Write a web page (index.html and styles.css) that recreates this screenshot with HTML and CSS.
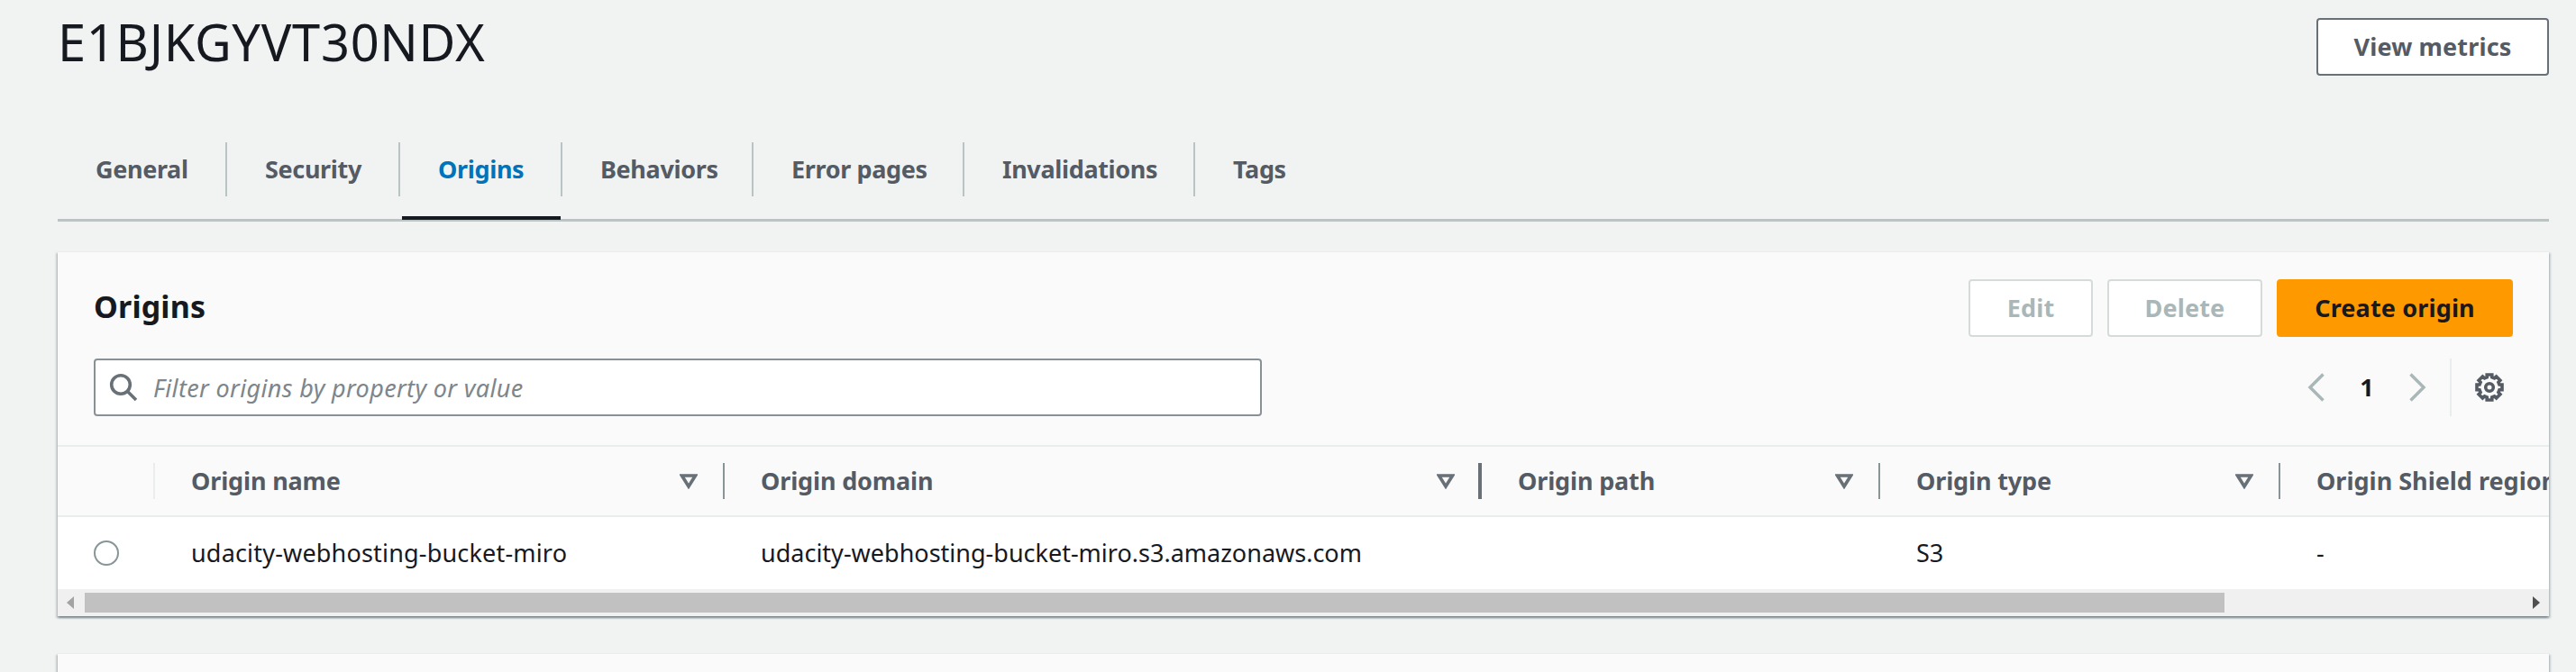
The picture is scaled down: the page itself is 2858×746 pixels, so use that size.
FILE: index.html
```html
<!DOCTYPE html>
<html lang="en">
<head>
<meta charset="utf-8">
<title>E1BJKGYVT30NDX</title>
<link rel="stylesheet" href="styles.css">
</head>
<body>
<main class="page">
  <header class="page-header">
    <h1 class="page-title">E1BJKGYVT30NDX</h1>
    <button class="btn metrics">View metrics</button>
  </header>

  <nav class="tabs">
    <a class="tab general">General</a>
    <a class="tab security">Security</a>
    <a class="tab origins active">Origins</a>
    <a class="tab behaviors">Behaviors</a>
    <a class="tab errors">Error pages</a>
    <a class="tab invalidations">Invalidations</a>
    <a class="tab tags">Tags</a>
  </nav>

  <section class="card">
    <div class="card-header">
      <h2 class="card-title">Origins</h2>
      <div class="actions">
        <button class="btn disabled edit">Edit</button>
        <button class="btn disabled delete">Delete</button>
        <button class="btn primary">Create origin</button>
      </div>
    </div>
    <div class="tools">
      <div class="filter">
        <svg class="search-icon" viewBox="0 0 32 32"><circle cx="13" cy="13" r="10.3"/><path d="M20.5 20.5 30 30"/></svg>
        <span class="placeholder">Filter origins by property or value</span>
      </div>
      <div class="pager">
        <svg class="chevron" viewBox="0 0 20 32"><path d="M17.500 1.500 3 16l14.500 14.500"/></svg>
        <span class="page-number">1</span>
        <svg class="chevron" viewBox="0 0 20 32"><path d="M2.500 1.500 17 16 2.500 30.500"/></svg>
        <span class="divider"></span>
        <svg class="gear" viewBox="0 0 32 32"><path d="M13.200 2h5.600v2.800l2.700 1.100 2.100-2 4.300 4.300-2 2.100 1.100 2.700H30v5.800h-3l-1.100 2.700 2 2.100-4.300 4.300-2.100-2-2.700 1.100V30h-5.600v-3l-2.700-1.100-2.100 2-4.300-4.300 2-2.100L5 18.800H2V13h3l1.100-2.700-2-2.100 4.300-4.300 2.100 2 2.700-1.100z"/><circle cx="16" cy="16" r="4.300"/></svg>
      </div>
    </div>

    <div class="grid head">
      <div class="cell light"></div>
      <div class="cell">Origin name<svg class="sort" viewBox="0 0 20 17"><path d="M2.500 2h15L10 14z"/></svg></div>
      <div class="cell resizing">Origin domain<svg class="sort" viewBox="0 0 20 17"><path d="M2.500 2h15L10 14z"/></svg></div>
      <div class="cell">Origin path<svg class="sort" viewBox="0 0 20 17"><path d="M2.500 2h15L10 14z"/></svg></div>
      <div class="cell">Origin type<svg class="sort" viewBox="0 0 20 17"><path d="M2.500 2h15L10 14z"/></svg></div>
      <div class="cell last">Origin Shield region</div>
    </div>
    <div class="grid row">
      <div class="pick"><span class="radio"></span></div>
      <div class="cell name">udacity-webhosting-bucket-miro</div>
      <div class="cell">udacity-webhosting-bucket-miro.s3.amazonaws.com</div>
      <div class="cell"></div>
      <div class="cell">S3</div>
      <div class="cell">-</div>
    </div>
    <div class="scrollbar">
      <svg class="arrow left" viewBox="0 0 8 14"><path d="M8 0v14L0 7z"/></svg>
      <span class="thumb"></span>
      <svg class="arrow right" viewBox="0 0 8 14"><path d="M0 0v14l8-7z"/></svg>
    </div>
  </section>

  <section class="card next"></section>
</main>
</body>
</html>
```
FILE: styles.css
```css
* { box-sizing: border-box; }

body {
  margin: 0;
  height: 746px;
  overflow: hidden;
  background: #f1f3f3;
  color: #16191f;
  font: 27px/40px "Noto Sans", sans-serif;
}

svg { display: block; flex: none; fill: none; stroke: currentColor; }

.page { padding: 0 30px 0 64px; }

.page-header {
  display: flex;
  justify-content: space-between;
  align-items: flex-start;
  height: 158px;
}
.page-title {
  margin: 10px 0 0;
  font-size: 56px;
  line-height: 72px;
  font-weight: 400;
  letter-spacing: 0.7px;
}

.btn {
  height: 64px;
  padding: 0;
  border: 2px solid #687078;
  border-radius: 4px;
  background: #fff;
  color: #545b64;
  font: 700 27px/40px "Noto Sans", sans-serif;
  letter-spacing: 0.15px;
  white-space: nowrap;
}
.metrics { width: 258px; margin-top: 20px; }
.disabled { border-color: #d5dbdb; color: #aab7b8; }
.edit { width: 138px; }
.delete { width: 172px; }
.primary { width: 262px; border-color: #f90; background: #f90; color: #16191f; }

.tabs {
  display: flex;
  height: 88px;
  border-bottom: 3px solid #b9c4c5;
}
.tab {
  position: relative;
  height: 60px;
  padding-left: 42px;
  border-right: 2px solid #b9c4c5;
  color: #545b64;
  font-weight: 700;
  line-height: 59px;
  letter-spacing: -0.35px;
  white-space: nowrap;
}
.general { width: 188px; }
.security { width: 192px; }
.origins { width: 180px; }
.behaviors { width: 212px; }
.errors { width: 234px; }
.invalidations { width: 256px; }
.tags { border-right: 0; }
.active { color: #0073bb; }
.active::after {
  content: "";
  position: absolute;
  left: 2px;
  right: 0;
  bottom: -26px;
  height: 4px;
  background: #16191f;
}

.card {
  height: 405px;
  margin-top: 33px;
  border-top: 1px solid #eaeded;
  background: #fafafa;
  box-shadow: 0 2px 2px rgba(0, 28, 36, 0.3), 2px 2px 2px rgba(0, 28, 36, 0.15), -2px 2px 2px rgba(0, 28, 36, 0.15);
}
.next { height: 21px; margin-top: 41px; }

.card-header {
  display: flex;
  justify-content: space-between;
  padding: 30px 40px 0;
}
.card-title { margin: 8px 0 0; font-size: 34px; line-height: 44px; letter-spacing: 0.15px; }
.actions { display: flex; gap: 16px; }

.tools {
  display: flex;
  justify-content: space-between;
  height: 122px;
  padding: 24px 40px 0;
  border-bottom: 2px solid #eaeded;
}
.filter {
  display: flex;
  align-items: center;
  width: 1296px;
  height: 64px;
  padding-left: 15px;
  border: 2px solid #879196;
  border-radius: 4px;
  background: #fff;
}
.search-icon { width: 32px; height: 32px; color: #687078; stroke-width: 3.6; }
.placeholder { padding: 2px 0 0 17px; color: #7d868c; font-style: italic; letter-spacing: 0.36px; }

.pager { display: flex; align-items: center; height: 64px; padding-right: 10px; }
.chevron { width: 20px; height: 32px; color: #aab7b8; stroke-width: 3.5; }
.page-number { width: 92px; text-align: center; font-weight: 700; }
.divider { width: 2px; height: 64px; margin: 0 26px 0 26px; background: #eaeded; }
.gear { width: 32px; height: 32px; color: #545b64; stroke-width: 3.6; }

.grid {
  display: grid;
  grid-template-columns: 108px 632px 840px 442px 444px 298px;
  align-items: center;
  overflow: hidden;
}
.cell { padding-left: 40px; white-space: nowrap; }

.head {
  height: 78px;
  border-bottom: 2px solid #eaeded;
  color: #545b64;
  font-weight: 700;
  letter-spacing: -0.15px;
}
.head .cell {
  display: flex;
  justify-content: space-between;
  align-items: center;
  height: 40px;
  padding-right: 28px;
  border-right: 2px solid #879596;
  line-height: 38px;
}
.head .light { border-color: #eaeded; }
.head .resizing { padding-right: 26px; border-right: 4px solid #687078; }
.head .last { padding-right: 0; border: 0; letter-spacing: 0; }
.sort { width: 20px; height: 17px; color: #687078; stroke-width: 3.6; }

.row { height: 80px; background: #fff; }
.row .name { letter-spacing: 0.18px; }
.pick { padding-left: 40px; }
.radio { display: block; width: 28px; height: 28px; border: 2px solid #879596; border-radius: 50%; background: #fff; }

.scrollbar {
  display: flex;
  align-items: center;
  height: 30px;
  padding: 0 10px;
  background: #f0f0f0;
}
.arrow { width: 8px; height: 14px; stroke: none; }
.arrow.left { fill: #a3a3a3; }
.arrow.right { fill: #505050; margin-left: auto; }
.thumb { width: 2374px; height: 22px; margin-left: 12px; background: #c1c1c1; }
```
